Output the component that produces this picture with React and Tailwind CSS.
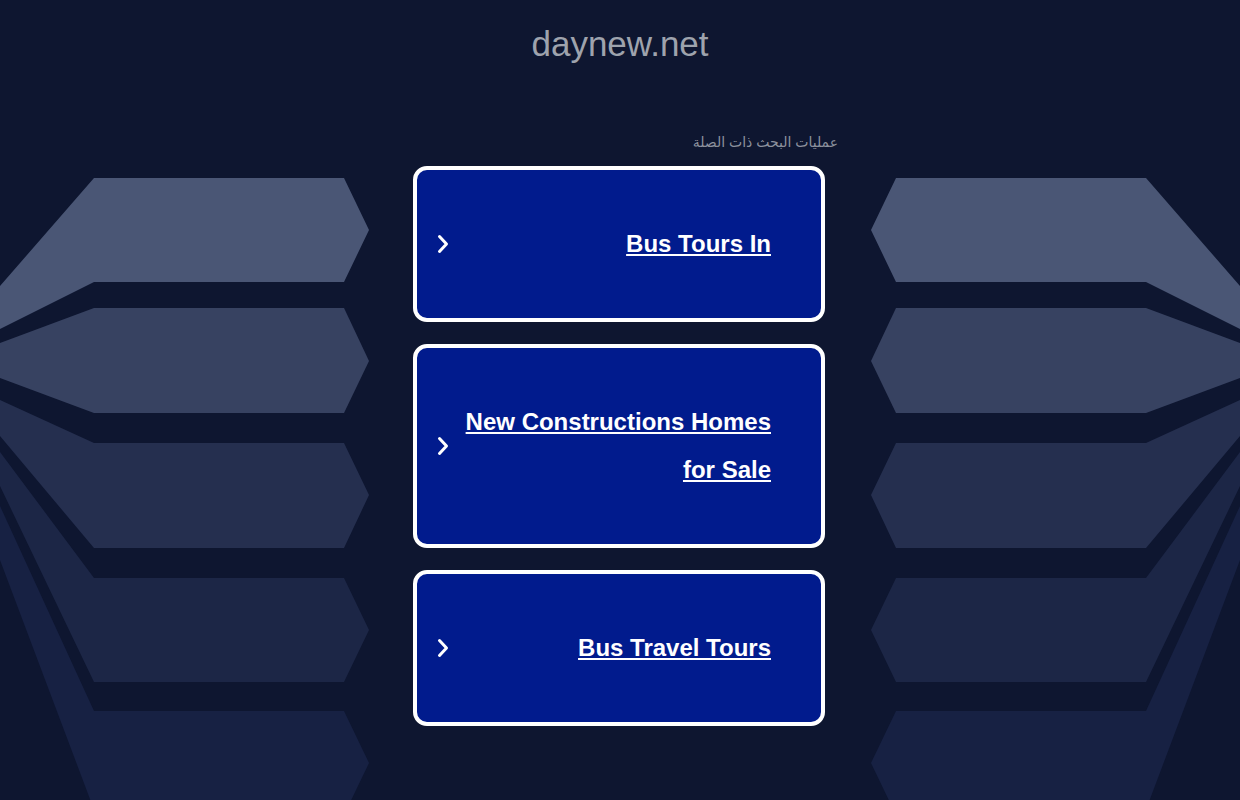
import React from 'react';

const shapes = [
  { fill: '#4a5675', points: '0,286 94,178 344,178 369,230 344,282 94,282 0,329' },
  { fill: '#374261', points: '0,343 94,308 344,308 369,361 344,413 94,413 0,378' },
  { fill: '#252f4f', points: '0,400 94,443 344,443 369,495 344,548 94,548 0,436' },
  { fill: '#1c2646', points: '0,452 94,578 344,578 369,630 344,682 94,682 0,486' },
  { fill: '#172143', points: '0,506 94,711 344,711 369,763 344,815 96,815 0,560' },
];

const links = [
  'Bus Tours In',
  'New Constructions Homes for Sale',
  'Bus Travel Tours',
];

const Backdrop = () => (
  <svg className="absolute inset-0 w-full h-full" viewBox="0 0 1240 800" preserveAspectRatio="none">
    <g>
      {shapes.map((s, i) => (
        <polygon key={i} points={s.points} fill={s.fill} />
      ))}
    </g>
    <g transform="translate(1240,0) scale(-1,1)">
      {shapes.map((s, i) => (
        <polygon key={i} points={s.points} fill={s.fill} />
      ))}
    </g>
  </svg>
);

const Chevron = () => (
  <svg width="12" height="20" viewBox="0 0 12 20" className="shrink-0">
    <path d="M2.5 2.5 L9.5 10 L2.5 17.5" fill="none" stroke="white" strokeWidth="3" strokeLinecap="round" strokeLinejoin="round" />
  </svg>
);

const LinkCard = ({ label }) => (
  <a href="#" className="flex items-center gap-[10px] bg-[#011b8d] border-4 border-white rounded-[14px] pl-[20px] pr-[50px] py-[50px]">
    <Chevron />
    <span className="flex-1 text-right text-white text-[24px] leading-[48px] font-bold underline">
      {label}
    </span>
  </a>
);

export default function App() {
  return (
    <div className="relative w-full h-[800px] overflow-hidden bg-[#0e1630] font-['Liberation_Sans','DejaVu_Sans',sans-serif]">
      <Backdrop />
      <div className="relative flex flex-col items-center pt-[24px]">
        <h1 className="text-[35px] leading-[40px] text-[#9ea3ad]">daynew.net</h1>
        <div className="w-[440px] mt-[68px]">
          <p dir="rtl" className="text-right pr-[2px] text-[14px] leading-[20px] text-[#8c919d]">
            عمليات البحث ذات الصلة
          </p>
          <div className="flex flex-col gap-[22px] ml-[13px] mr-[15px] mt-[14px]">
            {links.map((l) => (
              <LinkCard key={l} label={l} />
            ))}
          </div>
        </div>
      </div>
    </div>
  );
}
